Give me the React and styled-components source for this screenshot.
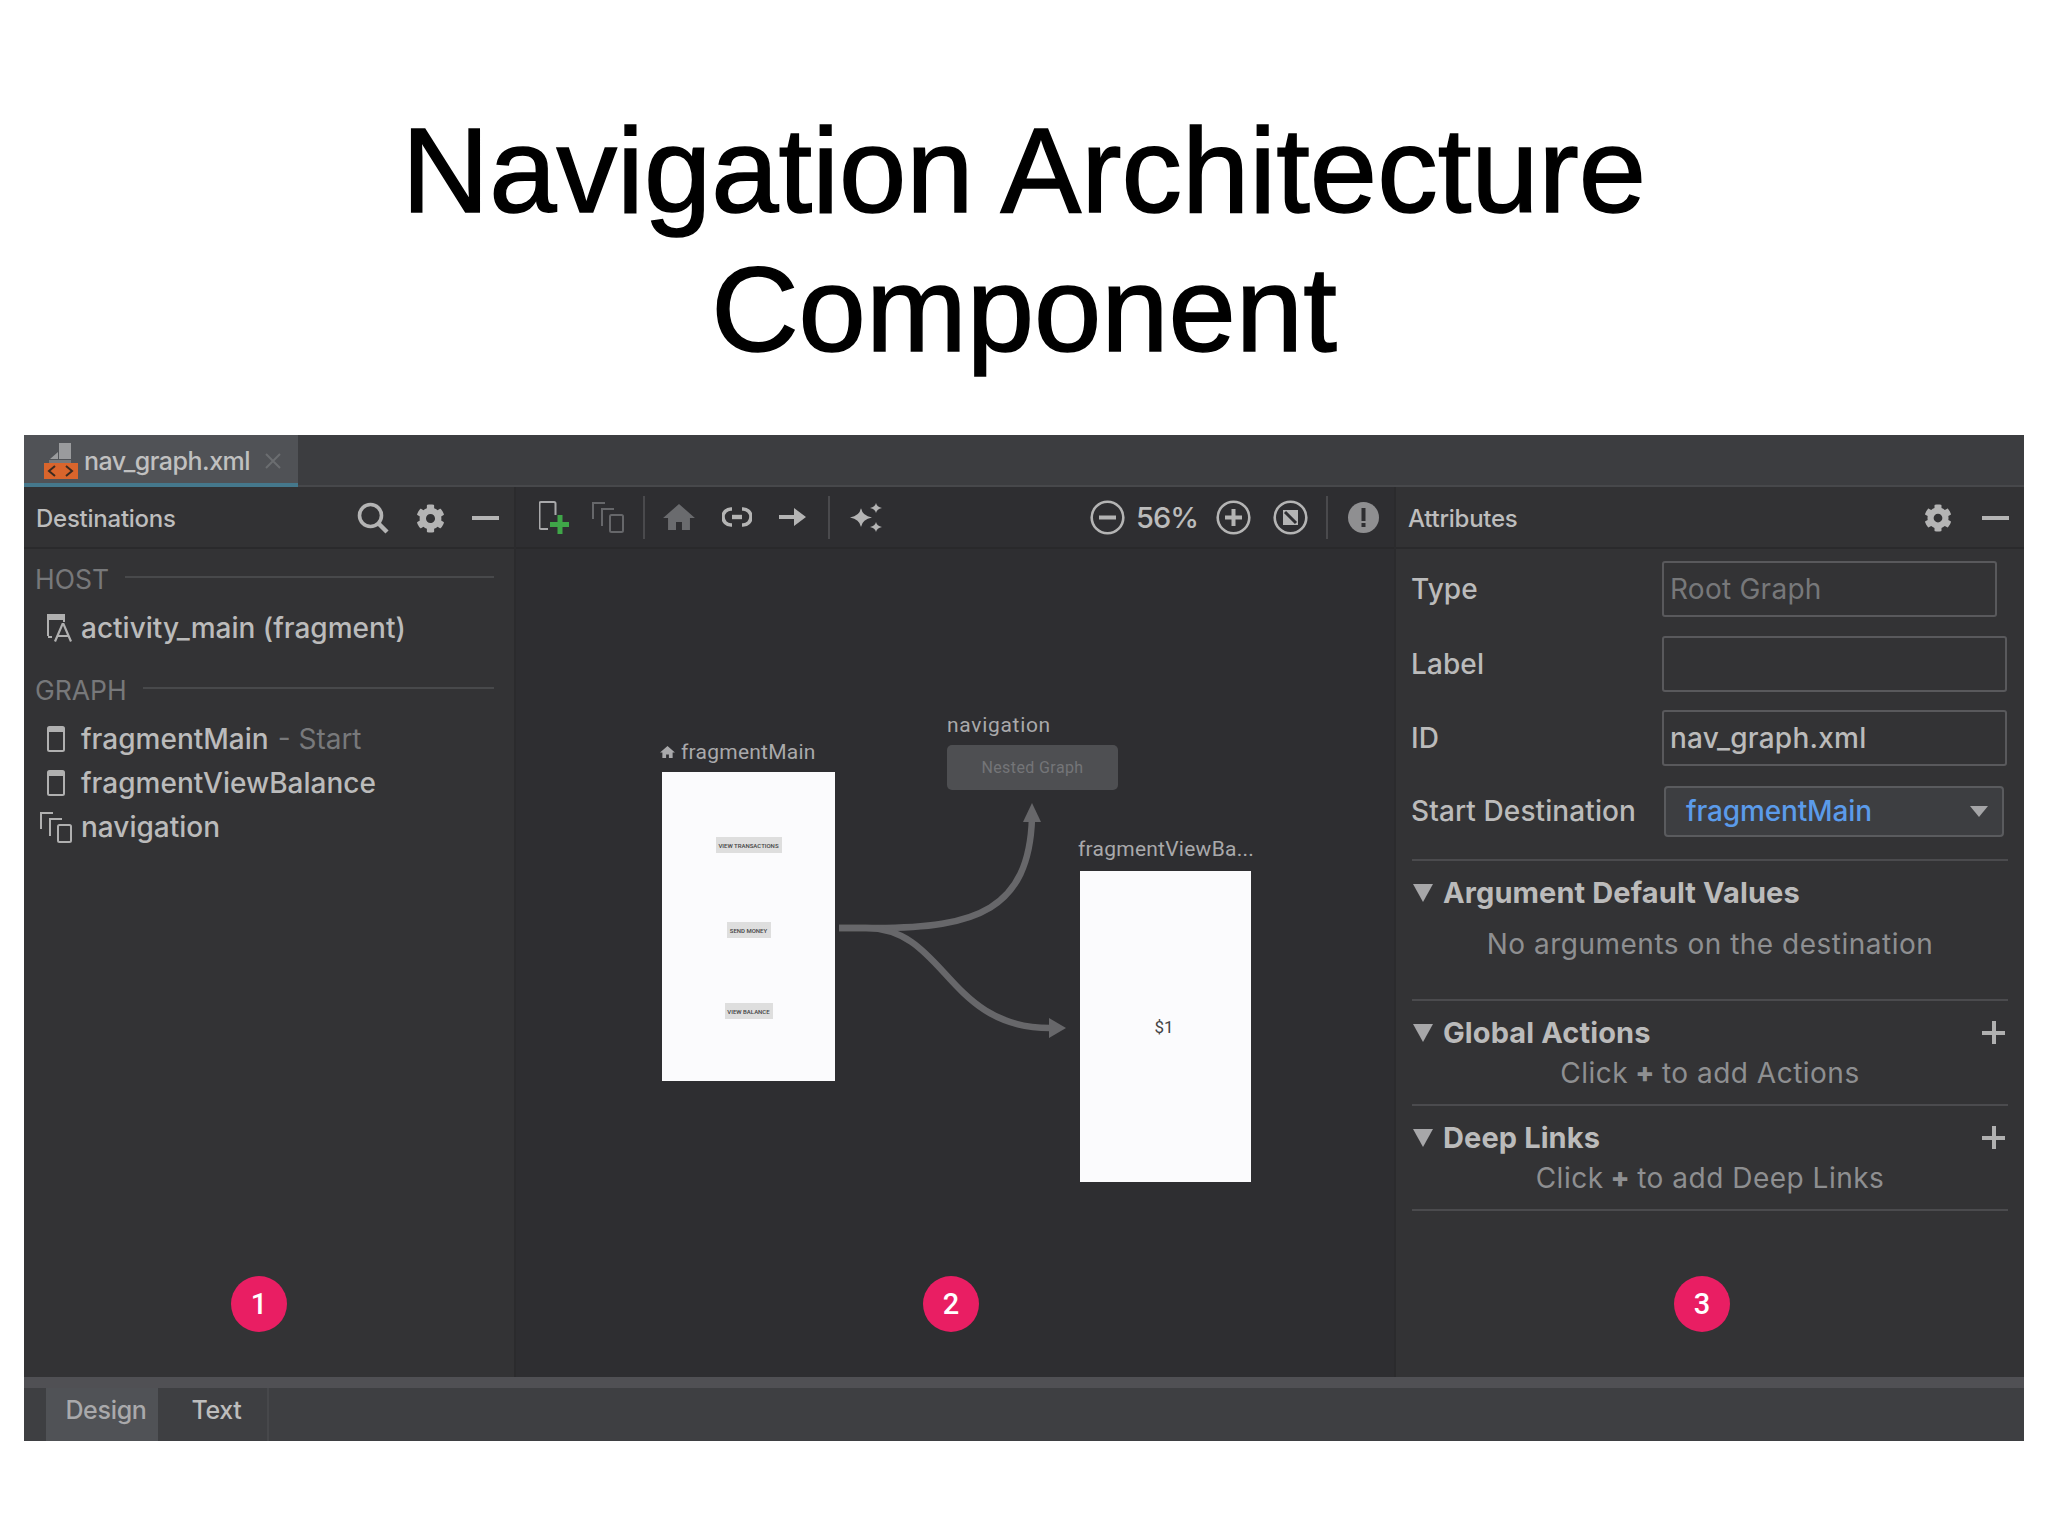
import React from "react";
import styled, { createGlobalStyle } from "styled-components";
import { FaCog } from "react-icons/fa";

const GlobalStyle = createGlobalStyle`
  html, body {
    margin: 0;
    padding: 0;
    background: #ffffff;
  }
  * {
    box-sizing: border-box;
  }
`;

const Page = styled.div`
  width: 2048px;
  height: 1536px;
  padding: 101px 24px 0;
  background: #fff;
  font-family: Inter, "Liberation Sans", sans-serif;
`;

const Title = styled.h1`
  margin: 0 0 56px;
  height: 278px;
  text-align: center;
  font-family: "Liberation Sans", Arial, sans-serif;
  font-weight: 400;
  font-size: 121px;
  line-height: 139px;
  color: #000;
  -webkit-text-stroke: 1.5px #000;
`;

const Ide = styled.div`
  width: 2000px;
  height: 1006px;
  display: flex;
  flex-direction: column;
  background: #333335;
  color: #bbbbbb;
`;

const FileTabs = styled.div`
  height: 52px;
  display: flex;
  background: #3c3d40;
  border-bottom: 2px solid #47484b;
`;

const FileTab = styled.div`
  width: 274px;
  height: 52px;
  display: flex;
  align-items: center;
  padding: 3px 0 0 20px;
  background: #505256;
  border-bottom: 4px solid #45788c;
  font-size: 25px;
  font-weight: 500;
  letter-spacing: -0.5px;
  color: #c0c0c0;
`;

const TabName = styled.span`
  margin-left: 6px;
  margin-right: 14px;
`;

const Main = styled.div`
  flex: 1;
  min-height: 0;
  display: grid;
  grid-template-columns: 492px 880px 628px;
`;

const Panel = styled.section`
  position: relative;
  display: flex;
  flex-direction: column;
  background: ${(p) => (p.$dark ? "#2e2e31" : "#333335")};
  border-right: ${(p) => (p.$divider ? "2px solid #2b2b2d" : "none")};
`;

const PanelHeader = styled.header`
  height: 62px;
  flex: none;
  display: flex;
  align-items: center;
  padding: 2px 15px 0 12px;
  background: #323234;
  border-bottom: 2px solid #2a2a2c;
  font-size: 24px;
  font-weight: 500;
  letter-spacing: -0.25px;
  color: #bdbdbd;
`;

const HeaderTitle = styled.span`
  flex: 1;
`;

const HeaderIcons = styled.div`
  display: flex;
  align-items: center;
  gap: ${(p) => p.$gap || 27}px;
  color: #b4b4b4;
`;

const Minus = styled.span`
  display: block;
  width: 27px;
  height: 4px;
  background: #b4b4b4;
`;

const Groups = styled.div`
  padding: 3px 20px 0 11px;
`;

const GroupHead = styled.div`
  height: 54px;
  margin-top: ${(p) => p.$top || 0}px;
  display: flex;
  align-items: center;
  gap: 16px;
  font-size: 26.5px;
  color: #77787a;

  &::after {
    content: "";
    flex: 1;
    height: 2px;
    margin-top: -4px;
    background: #48494b;
  }
`;

const TreeRow = styled.div`
  height: 44px;
  display: flex;
  align-items: center;
  font-size: 28px;
  font-weight: 500;
  letter-spacing: 0;
  color: #bbbbbb;
`;

const TreeIcon = styled.span`
  width: 46px;
  flex: none;
  display: flex;
  justify-content: flex-end;
  padding-right: ${(p) => p.$pad || 9}px;
`;

const Muted = styled.span`
  margin-left: 9px;
  font-weight: 400;
  color: #78797b;
`;

const Toolbar = styled.div`
  height: 62px;
  flex: none;
  display: flex;
  align-items: center;
  background: #2e2e31;
  border-bottom: 2px solid #29292b;
  padding-left: 23px;
`;

const ToolGroup = styled.div`
  display: flex;
  align-items: center;
  gap: ${(p) => p.$gap || 23}px;
  margin-left: ${(p) => p.$left || 0}px;
`;

const ToolSep = styled.span`
  width: 2px;
  height: 43px;
  margin: 0 ${(p) => p.$right ?? 20}px 0 ${(p) => p.$left ?? 20}px;
  background: #4a4a4d;
`;

const Percent = styled.span`
  margin-right: 7px;
  font-size: 29px;
  font-weight: 500;
  letter-spacing: -1px;
  color: #bbbbbb;
`;

const Canvas = styled.div`
  position: relative;
  flex: 1;
  margin-top: 1px;
`;

const Wires = styled.svg`
  position: absolute;
  left: 0;
  top: 0;
`;

const NodeLabel = styled.div`
  position: absolute;
  left: ${(p) => p.$x}px;
  top: ${(p) => p.$y}px;
  display: flex;
  align-items: center;
  gap: 6px;
  height: 26px;
  font-family: Roboto, sans-serif;
  font-size: 21px;
  letter-spacing: ${(p) => p.$track ?? 0.25}px;
  color: #a9a9ab;
  white-space: nowrap;
`;

const Screen = styled.div`
  position: absolute;
  left: ${(p) => p.$x}px;
  top: ${(p) => p.$y}px;
  width: ${(p) => p.$w}px;
  height: ${(p) => p.$h}px;
  background: #fbfbfd;
  display: flex;
  flex-direction: column;
  align-items: center;
  justify-content: ${(p) => (p.$center ? "center" : "flex-start")};
`;

const ScreenButton = styled.div`
  width: ${(p) => p.$w}px;
  height: 16px;
  margin-top: ${(p) => p.$top}px;
  display: flex;
  align-items: center;
  justify-content: center;
  background: #dedede;
  font-family: Roboto, sans-serif;
  font-weight: 500;
  font-size: 6px;
  white-space: nowrap;
  color: #444;
`;

const ScreenText = styled.span`
  margin-right: 3px;
  font-family: Roboto, sans-serif;
  font-size: 17px;
  color: #444;
`;

const NestedGraph = styled.div`
  position: absolute;
  left: 431px;
  top: 195px;
  width: 171px;
  height: 45px;
  display: flex;
  align-items: center;
  justify-content: center;
  border-radius: 5px;
  background: #4e4f52;
  font-family: Roboto, sans-serif;
  font-size: 16px;
  letter-spacing: 0.4px;
  color: #747578;
`;

const Badge = styled.div`
  position: absolute;
  left: ${(p) => p.$x}px;
  bottom: 45px;
  width: 56px;
  height: 56px;
  display: flex;
  align-items: center;
  justify-content: center;
  border-radius: 50%;
  background: #e91e63;
  font-family: Roboto, sans-serif;
  font-weight: 500;
  font-size: 29px;
  color: #fff;
`;

const Form = styled.div`
  padding: 12px 17px 0 15px;
  display: flex;
  flex-direction: column;
  gap: 18.5px;
`;

const FormRow = styled.div`
  height: ${(p) => p.$h || 56}px;
  margin-top: ${(p) => p.$top || 0}px;
  display: grid;
  grid-template-columns: 251px 1fr;
  align-items: center;
  font-size: 28px;
  font-weight: 500;
  letter-spacing: 0.1px;
  color: #bbbbbb;
`;

const Field = styled.div`
  height: ${(p) => p.$h || 56}px;
  margin-right: ${(p) => p.$inset || 0}px;
  display: flex;
  align-items: center;
  padding-left: 6px;
  border: 2px solid #59595c;
  border-radius: 3px;
  letter-spacing: 0.25px;
  font-weight: ${(p) => (p.$disabled ? 400 : 500)};
  color: ${(p) => (p.$disabled ? "#77787a" : "#bbbbbb")};
`;

const Select = styled.div`
  height: 51px;
  margin: 0 3px 0 2px;
  display: flex;
  align-items: center;
  justify-content: space-between;
  padding: 0 14px 0 20px;
  background: #3d3e41;
  border: 2px solid #5a5b5e;
  border-radius: 4px;
  letter-spacing: -0.15px;
  color: #5b9bea;

  &::after {
    content: "";
    border-left: 9px solid transparent;
    border-right: 9px solid transparent;
    border-top: 11px solid #a5a5a7;
  }
`;

const Sections = styled.div`
  margin: 22px 16px 0 16px;
  border-top: 2px solid #4b4b4e;
`;

const Section = styled.div`
  padding: ${(p) => p.$pad || 12}px 0 ${(p) => p.$bottom || 11}px;
  border-bottom: 2px solid #4b4b4e;
`;

const SectionHead = styled.div`
  height: 40px;
  display: flex;
  align-items: center;
  gap: 10px;
  font-size: 29px;
  font-weight: 700;
  letter-spacing: 0.1px;
  color: #bbbbbb;

  &::before {
    content: "";
    margin-left: 1px;
    border-left: 10px solid transparent;
    border-right: 10px solid transparent;
    border-top: 18px solid #a7a7a9;
  }
`;

const HeadText = styled.span`
  flex: 1;
`;

const AddIcon = styled.span`
  position: relative;
  width: 23px;
  height: 23px;
  margin-right: 3px;

  &::before,
  &::after {
    content: "";
    position: absolute;
    background: #b0b0b0;
  }
  &::before {
    left: 0;
    right: 0;
    top: 9.5px;
    height: 4px;
  }
  &::after {
    top: 0;
    bottom: 0;
    left: 9.5px;
    width: 4px;
  }
`;

const SectionNote = styled.div`
  height: 40px;
  margin-top: ${(p) => p.$top || 0}px;
  display: flex;
  align-items: center;
  justify-content: center;
  gap: 7px;
  font-size: 28px;
  letter-spacing: 0.5px;
  color: #8e8f91;

  b {
    font-weight: 800;
  }
`;

const Strip = styled.div`
  height: 11px;
  flex: none;
  background: #505054;
`;

const BottomTabs = styled.div`
  height: 53px;
  flex: none;
  display: flex;
  padding-left: 22px;
  background: #3e3f42;
`;

const BottomTab = styled.div`
  width: ${(p) => p.$w}px;
  display: flex;
  align-items: center;
  justify-content: center;
  padding: 0 0 9px 8px;
  font-size: 25px;
  font-weight: 500;
  letter-spacing: -0.3px;
  background: ${(p) => (p.$active ? "#505256" : "transparent")};
  border-right: ${(p) => (p.$active ? "none" : "2px solid #47484b")};
  color: ${(p) => (p.$active ? "#a9a9ab" : "#bdbdbd")};
`;

const XmlIcon = () => (
  <svg width="34" height="36" viewBox="0 0 34 36">
    <path d="M6 16 L14 9 V16 Z M15 0 H27 V16 H15 Z" fill="#9a9b9d" />
    <path d="M5 17 H27 V20 H5 Z" fill="#77787a" />
    <rect x="0" y="20" width="34" height="16" fill="#d9652c" />
    <path d="M11 23 L5 28 L11 33 M22 23 L28 28 L22 33" fill="none" stroke="#3a2a20" strokeWidth="2" />
  </svg>
);

const CloseIcon = () => (
  <svg width="18" height="18" viewBox="0 0 18 18">
    <path d="M2 2 L16 16 M16 2 L2 16" stroke="#6b6d70" strokeWidth="2" />
  </svg>
);

const SearchIcon = () => (
  <svg width="32" height="32" viewBox="0 0 32 32" fill="none" stroke="#b4b4b4" strokeWidth="3.6">
    <circle cx="13.5" cy="13.5" r="11" />
    <path d="M21.5 21.5 L30 30" strokeWidth="4.4" />
  </svg>
);

const FragmentIcon = () => (
  <svg width="25" height="28" viewBox="0 0 25 28" fill="none">
    <path d="M1 22 V2 H17 V8" stroke="#b0b0b0" strokeWidth="2" />
    <rect x="0" y="0" width="18" height="6" fill="#b0b0b0" />
    <path d="M1 23 H5" stroke="#b0b0b0" strokeWidth="2" />
    <path d="M8 27.5 L15.5 10 H16.5 L24 27.5 M10.5 22 H21.5" stroke="#b0b0b0" strokeWidth="2.2" />
  </svg>
);

const PhoneIcon = () => (
  <svg width="18" height="26" viewBox="0 0 18 26" fill="none">
    <rect x="1" y="1" width="16" height="24" rx="1.5" stroke="#b0b0b0" strokeWidth="2" />
    <rect x="1" y="1" width="16" height="5" fill="#b0b0b0" />
  </svg>
);

const StackIcon = ({ color = "#b0b0b0", back = "#333335" }) => (
  <svg width="32" height="31" viewBox="0 0 32 31" fill="none" stroke={color} strokeWidth="2">
    <path d="M1 17 V1 H13 M10 24 V7 H22" />
    <rect x="18" y="13" width="13" height="17" rx="1.5" fill={back} />
  </svg>
);

const HomeGlyph = ({ size, color }) => (
  <svg width={size} height={size * 0.84} viewBox="0 0 32 27">
    <path d="M16 0 L32 14 H27 V27 H19 V18 H13 V27 H5 V14 H0 Z" fill={color} />
  </svg>
);

const NewDestIcon = () => (
  <svg width="31" height="33" viewBox="0 0 31 33" fill="none">
    <path d="M9 28 H2 a1.5 1.5 0 0 1 -1.5 -1.5 V2.5 A1.5 1.5 0 0 1 2 1 H15 a1.5 1.5 0 0 1 1.5 1.5 V14" stroke="#a9a9ab" strokeWidth="2" />
    <path d="M21 14 V33 M11 23.5 H30" stroke="#3fa648" strokeWidth="5" />
  </svg>
);

const LinkIcon = () => (
  <svg width="30" height="20" viewBox="0 0 30 20" fill="none" stroke="#b4b4b4" strokeWidth="3.6">
    <path d="M10 2 H9 a8 8 0 0 0 0 16 H10 M20 2 H21 a8 8 0 0 1 0 16 H20" />
    <path d="M10 10 H20" strokeWidth="4.4" />
  </svg>
);

const ArrowIcon = () => (
  <svg width="27" height="18" viewBox="0 0 27 18">
    <path d="M0 7 H15 V0 L27 9 L15 18 V11 H0 Z" fill="#b4b4b4" />
  </svg>
);

const SparkleIcon = () => (
  <svg width="33" height="29" viewBox="0 0 33 29">
    <path d="M11 5 Q12.5 13 22 14.5 Q12.5 16 11 24 Q9.5 16 0 14.5 Q9.5 13 11 5 Z" fill="#b4b4b4" />
    <path d="M26 0 Q26.8 4 32 5 Q26.8 6 26 10 Q25.2 6 20 5 Q25.2 4 26 0 Z" fill="#b4b4b4" />
    <path d="M26 19 Q26.8 23 32 24 Q26.8 25 26 29 Q25.2 25 20 24 Q25.2 23 26 19 Z" fill="#b4b4b4" />
  </svg>
);

const RoundIcon = ({ children }) => (
  <svg width="35" height="35" viewBox="0 0 35 35" fill="none">
    <circle cx="17.5" cy="17.5" r="15.8" stroke="#b4b4b4" strokeWidth="2.6" />
    {children}
  </svg>
);

const WarnIcon = () => (
  <svg width="31" height="31" viewBox="0 0 31 31">
    <circle cx="15.5" cy="15.5" r="15.5" fill="#8f8f91" />
    <rect x="13.5" y="6" width="4" height="13" fill="#2e2e31" />
    <rect x="13.5" y="21" width="4" height="4" fill="#2e2e31" />
  </svg>
);

const App = () => {
  return (
    <Page>
      <GlobalStyle />
      <Title>
        Navigation Architecture
        <br />
        Component
      </Title>
      <Ide>
        <FileTabs>
          <FileTab>
            <XmlIcon />
            <TabName>nav_graph.xml</TabName>
            <CloseIcon />
          </FileTab>
        </FileTabs>
        <Main>
          <Panel $divider>
            <PanelHeader>
              <HeaderTitle>Destinations</HeaderTitle>
              <HeaderIcons>
                <SearchIcon />
                <FaCog size={29} />
                <Minus />
              </HeaderIcons>
            </PanelHeader>
            <Groups>
              <GroupHead>HOST</GroupHead>
              <TreeRow>
                <TreeIcon>
                  <FragmentIcon />
                </TreeIcon>
                activity_main (fragment)
              </TreeRow>
              <GroupHead $top={13}>GRAPH</GroupHead>
              <TreeRow>
                <TreeIcon $pad={16}>
                  <PhoneIcon />
                </TreeIcon>
                fragmentMain
                <Muted>- Start</Muted>
              </TreeRow>
              <TreeRow>
                <TreeIcon $pad={16}>
                  <PhoneIcon />
                </TreeIcon>
                fragmentViewBalance
              </TreeRow>
              <TreeRow>
                <TreeIcon>
                  <StackIcon />
                </TreeIcon>
                navigation
              </TreeRow>
            </Groups>
            <Badge $x={207}>1</Badge>
          </Panel>

          <Panel $dark $divider>
            <Toolbar>
              <NewDestIcon />
              <ToolGroup $left={22}>
                <StackIcon color="#66676a" back="#2e2e31" />
              </ToolGroup>
              <ToolSep $left={19} $right={18} />
              <ToolGroup $gap={27}>
                <HomeGlyph size={32} color="#6a6b6e" />
                <LinkIcon />
                <ArrowIcon />
              </ToolGroup>
              <ToolSep $left={22} $right={20} />
              <SparkleIcon />
              <ToolGroup $left={207} $gap={11}>
                <RoundIcon>
                  <rect x="9" y="15.5" width="17" height="4" fill="#b4b4b4" />
                </RoundIcon>
                <Percent>56%</Percent>
                <RoundIcon>
                  <path d="M9 17.5 H26 M17.5 9 V26" stroke="#b4b4b4" strokeWidth="4" />
                </RoundIcon>
              </ToolGroup>
              <ToolGroup $left={22}>
                <RoundIcon>
                  <rect x="10" y="10" width="15" height="15" fill="#b4b4b4" />
                  <path d="M12 12 L23 23" stroke="#2e2e31" strokeWidth="3" />
                </RoundIcon>
              </ToolGroup>
              <ToolSep $left={18} $right={20} />
              <WarnIcon />
            </Toolbar>
            <Canvas>
              <Wires width="880" height="800" viewBox="0 0 880 800" fill="none">
                <path d="M323 378 L360 378 C460 378 513 360 516 268" stroke="#67676a" strokeWidth="6.5" />
                <path d="M323 378 L350 378 C430 378 430 478 534 478" stroke="#67676a" strokeWidth="6.5" />
                <path d="M516 253 L507 272 H525 Z" fill="#67676a" />
                <path d="M550 478 L533 468 V488 Z" fill="#67676a" />
              </Wires>
              <NodeLabel $x={144} $y={189}>
                <HomeGlyph size={15} color="#a9a9ab" />
                fragmentMain
              </NodeLabel>
              <Screen $x={146} $y={222} $w={173} $h={309}>
                <ScreenButton $w={66} $top={65}>VIEW TRANSACTIONS</ScreenButton>
                <ScreenButton $w={44} $top={69}>SEND MONEY</ScreenButton>
                <ScreenButton $w={48} $top={65}>VIEW BALANCE</ScreenButton>
              </Screen>
              <NodeLabel $x={431} $y={162} $track={0.7}>navigation</NodeLabel>
              <NestedGraph>Nested Graph</NestedGraph>
              <NodeLabel $x={562} $y={286}>fragmentViewBa...</NodeLabel>
              <Screen $x={564} $y={321} $w={171} $h={311} $center>
                <ScreenText>$1</ScreenText>
              </Screen>
              <Badge $x={407}>2</Badge>
            </Canvas>
          </Panel>

          <Panel>
            <PanelHeader>
              <HeaderTitle>Attributes</HeaderTitle>
              <HeaderIcons $gap={30}>
                <FaCog size={28} />
                <Minus />
              </HeaderIcons>
            </PanelHeader>
            <Form>
              <FormRow>
                Type
                <Field $disabled $inset={10}>Root Graph</Field>
              </FormRow>
              <FormRow>
                Label
                <Field />
              </FormRow>
              <FormRow>
                ID
                <Field>nav_graph.xml</Field>
              </FormRow>
              <FormRow $h={51} $top={1}>
                Start Destination
                <Select>fragmentMain</Select>
              </FormRow>
            </Form>
            <Sections>
              <Section $pad={12} $bottom={35}>
                <SectionHead>
                  <HeadText>Argument Default Values</HeadText>
                </SectionHead>
                <SectionNote $top={11}>No arguments on the destination</SectionNote>
              </Section>
              <Section>
                <SectionHead>
                  <HeadText>Global Actions</HeadText>
                  <AddIcon />
                </SectionHead>
                <SectionNote>Click <b>+</b> to add Actions</SectionNote>
              </Section>
              <Section>
                <SectionHead>
                  <HeadText>Deep Links</HeadText>
                  <AddIcon />
                </SectionHead>
                <SectionNote>Click <b>+</b> to add Deep Links</SectionNote>
              </Section>
            </Sections>
            <Badge $x={278}>3</Badge>
          </Panel>
        </Main>
        <Strip />
        <BottomTabs>
          <BottomTab $active $w={112}>Design</BottomTab>
          <BottomTab $w={111}>Text</BottomTab>
        </BottomTabs>
      </Ide>
    </Page>
  );
};

export default App;
